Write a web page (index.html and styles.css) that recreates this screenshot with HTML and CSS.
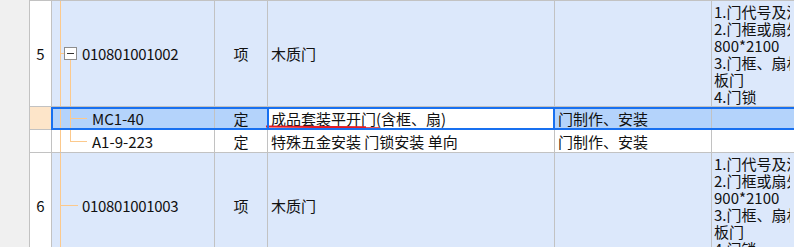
FILE: index.html
```html
<!DOCTYPE html>
<html lang="zh-CN">
<head>
    <meta charset="UTF-8">
    <title>清单定额</title>
    <link rel="stylesheet" href="styles.css">
</head>
<body>

    <div class="screen">
        <div class="gutter"></div>
        <div class="grid">

            <div class="row item">
                <div class="cell num">5</div>
                <div class="cell code tree-open"><span class="fold"></span><span class="txt-code">010801001002</span></div>
                <div class="cell unit">项</div>
                <div class="cell name">木质门</div>
                <div class="cell work"></div>
                <div class="cell feat"><div class="lines">1.门代号及洞口尺寸<br>2.门框或扇外围尺寸<br>800*2100<br>3.门框、扇材质:夹<br>板门<br>4.门锁</div></div>
            </div>

            <div class="row sub sel">
                <div class="cell num">&nbsp;</div>
                <div class="cell code tree-mid">MC1-40</div>
                <div class="cell unit">定</div>
                <div class="cell name edit">成品套装平开门(含框、扇)
                    <svg class="mark" width="120" height="23" viewBox="0 0 120 23">
                        <path d="M0 19.5 L100 20.3 M100 21.3 L113 21.3" stroke="#e51b24" stroke-width="2.2" fill="none"/>
                    </svg>
                </div>
                <div class="cell work">门制作、安装</div>
                <div class="cell feat"></div>
            </div>

            <div class="row sub">
                <div class="cell num">&nbsp;</div>
                <div class="cell code tree-last">A1-9-223</div>
                <div class="cell unit">定</div>
                <div class="cell name">特殊五金安装 门锁安装 单向</div>
                <div class="cell work">门制作、安装</div>
                <div class="cell feat"></div>
            </div>

            <div class="row item">
                <div class="cell num">6</div>
                <div class="cell code tree-leaf"><span class="txt-code">010801001003</span></div>
                <div class="cell unit">项</div>
                <div class="cell name">木质门</div>
                <div class="cell work"></div>
                <div class="cell feat"><div class="lines">1.门代号及洞口尺寸<br>2.门框或扇外围尺寸<br>900*2100<br>3.门框、扇材质:夹<br>板门<br>4.门锁</div></div>
            </div>

        </div>
    </div>

</body>
</html>
```

FILE: styles.css
```css
body { margin: 0; overflow: hidden; background: #fff; font-family: "Noto Sans CJK SC", "Noto Sans", sans-serif; font-size: 15px; color: #111; }
.screen { display: flex; width: 794px; height: 247px; overflow: hidden; }
.gutter { width: 29px; flex: none; background: #f0f0f0; border-right: 1px solid #c2c2c2; }
.grid { flex: 1; min-width: 0; border-top: 1px solid #c2c2c2; overflow: hidden; }

.row { display: flex; border-bottom: 1px solid #c2c2c2; box-sizing: border-box; }
.row.item { height: 106px; }
.row.sub { height: 23px; }
.row.sel { position: relative; }
.row.sel::after { content: ""; position: absolute; left: 21px; right: -20px; top: 0; height: 23px; border: 2px solid #1870f0; box-sizing: border-box; pointer-events: none; }

.cell { display: flex; align-items: center; box-sizing: border-box; border-right: 1px solid #c2c2c2; white-space: nowrap; line-height: 17px; flex: none; }
.num { width: 22px; justify-content: center; background: #fff; }
.code { width: 163px; background-repeat: no-repeat; }
.unit { width: 53px; justify-content: center; }
.name { width: 287px; padding-left: 3px; }
.work { width: 157px; padding-left: 3px; }
.feat { flex: 1; padding-left: 2px; border-right: none; }
.lines { width: 76px; overflow: hidden; }

.item .code, .item .unit, .item .name, .item .work, .item .feat { background-color: #dce8fb; }
.sel .code, .sel .unit, .sel .work, .sel .feat { background-color: #b4d3fb; }
.sel .num { background: #fde5c9; }
.edit { position: relative; background: #fff; }
.edit::after { content: ""; position: absolute; top: 0; bottom: 0; left: -1px; right: -1px; border-left: 2px solid #1870f0; border-right: 2px solid #1870f0; }
.mark { position: absolute; left: -2px; top: 0; }

/* tree guide lines */
.code { --ln: linear-gradient(#fcc98c, #fcc98c); }
.tree-open { padding-left: 12px; background-image: var(--ln), var(--ln), var(--ln); background-position: 8px 0, 8px 50%, 18px 100%; background-size: 1px 100%, 4px 1px, 1px calc(50% - 6px); }
.tree-mid { padding-left: 40px; background-image: var(--ln), var(--ln), var(--ln); background-position: 8px 0, 18px 0, 18px 50%; background-size: 1px 100%, 1px 100%, 17px 1px; }
.tree-last { padding-left: 40px; background-image: var(--ln), var(--ln), var(--ln); background-position: 8px 0, 18px 0, 18px 50%; background-size: 1px 100%, 1px 50%, 17px 1px; }
.tree-leaf { padding-left: 30px; background-image: var(--ln), var(--ln); background-position: 8px 0, 8px 50%; background-size: 1px 100%, 18px 1px; }

.fold { width: 13px; height: 13px; box-sizing: border-box; border: 1px solid #8e8e8e; background: #fff; display: flex; align-items: center; justify-content: center; margin-right: 5px; }
.fold::before { content: ""; width: 7px; height: 1px; background: #333; }
.txt-code { letter-spacing: -0.3px; }
```
